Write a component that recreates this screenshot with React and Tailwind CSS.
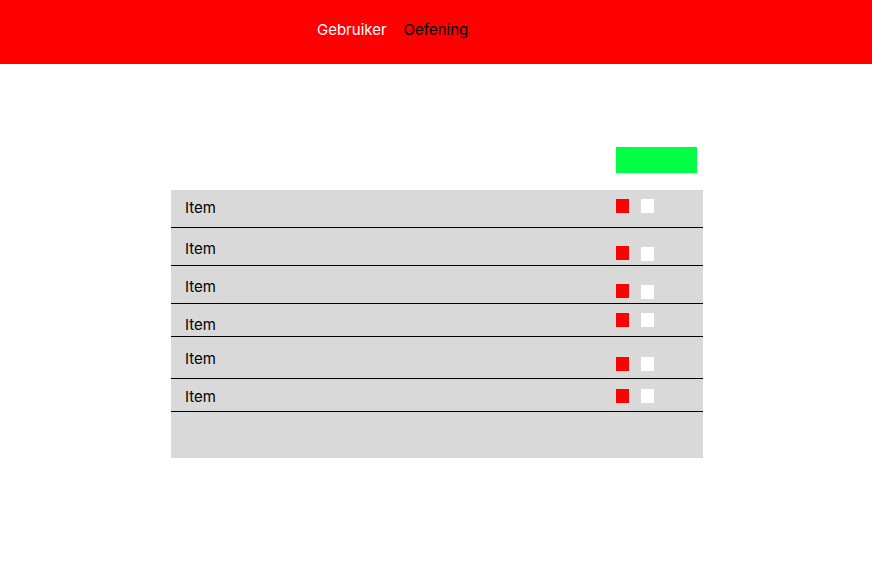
import React from 'react';

const rows = [
  { h: 'h-[38px]', text: 'pt-[9px]', red: 'mt-[9px]', white: 'mt-[9px]' },
  { h: 'h-[38px]', text: 'pt-[12px]', red: 'mt-[18px]', white: 'mt-[19px]' },
  { h: 'h-[38px]', text: 'pt-[12px]', red: 'mt-[18px]', white: 'mt-[19px]' },
  { h: 'h-[33px]', text: 'pt-[12px]', red: 'mt-[9px]', white: 'mt-[9px]' },
  { h: 'h-[42px]', text: 'pt-[13px]', red: 'mt-[20px]', white: 'mt-[20px]' },
  { h: 'h-[33px]', text: 'pt-[9px]', red: 'mt-[10px]', white: 'mt-[10px]' },
];

export default function App() {
  return (
    <div className="min-h-[582px] bg-white font-['Inter','Liberation_Sans',sans-serif] text-[15px] leading-[18px]">
      {/* top bar */}
      <nav className="h-16 bg-[#ff0000] flex items-start gap-[17px] pl-[317px] pt-[21px]">
        <span className="text-white">Gebruiker</span>
        <span className="text-black">Oefening</span>
      </nav>

      <div className="ml-[171px] w-[532px] pt-[83px]">
        <div className="flex justify-end pr-[6px]">
          <button className="w-[81px] h-[26px] bg-[#00ff44]" />
        </div>

        <div className="mt-[17px] h-[268px] bg-[#d9d9d9]">
          {rows.map((r, i) => (
            <div key={i} className={`flex items-start border-b border-black ${r.h}`}>
              <div className={`w-[445px] pl-[14px] text-black ${r.text}`}>Item</div>
              <div className={`w-[13px] h-[14px] bg-[#ff0000] ${r.red}`} />
              <div className={`w-[13px] h-[14px] bg-white ml-[12px] ${r.white}`} />
            </div>
          ))}
        </div>
      </div>
    </div>
  );
}
